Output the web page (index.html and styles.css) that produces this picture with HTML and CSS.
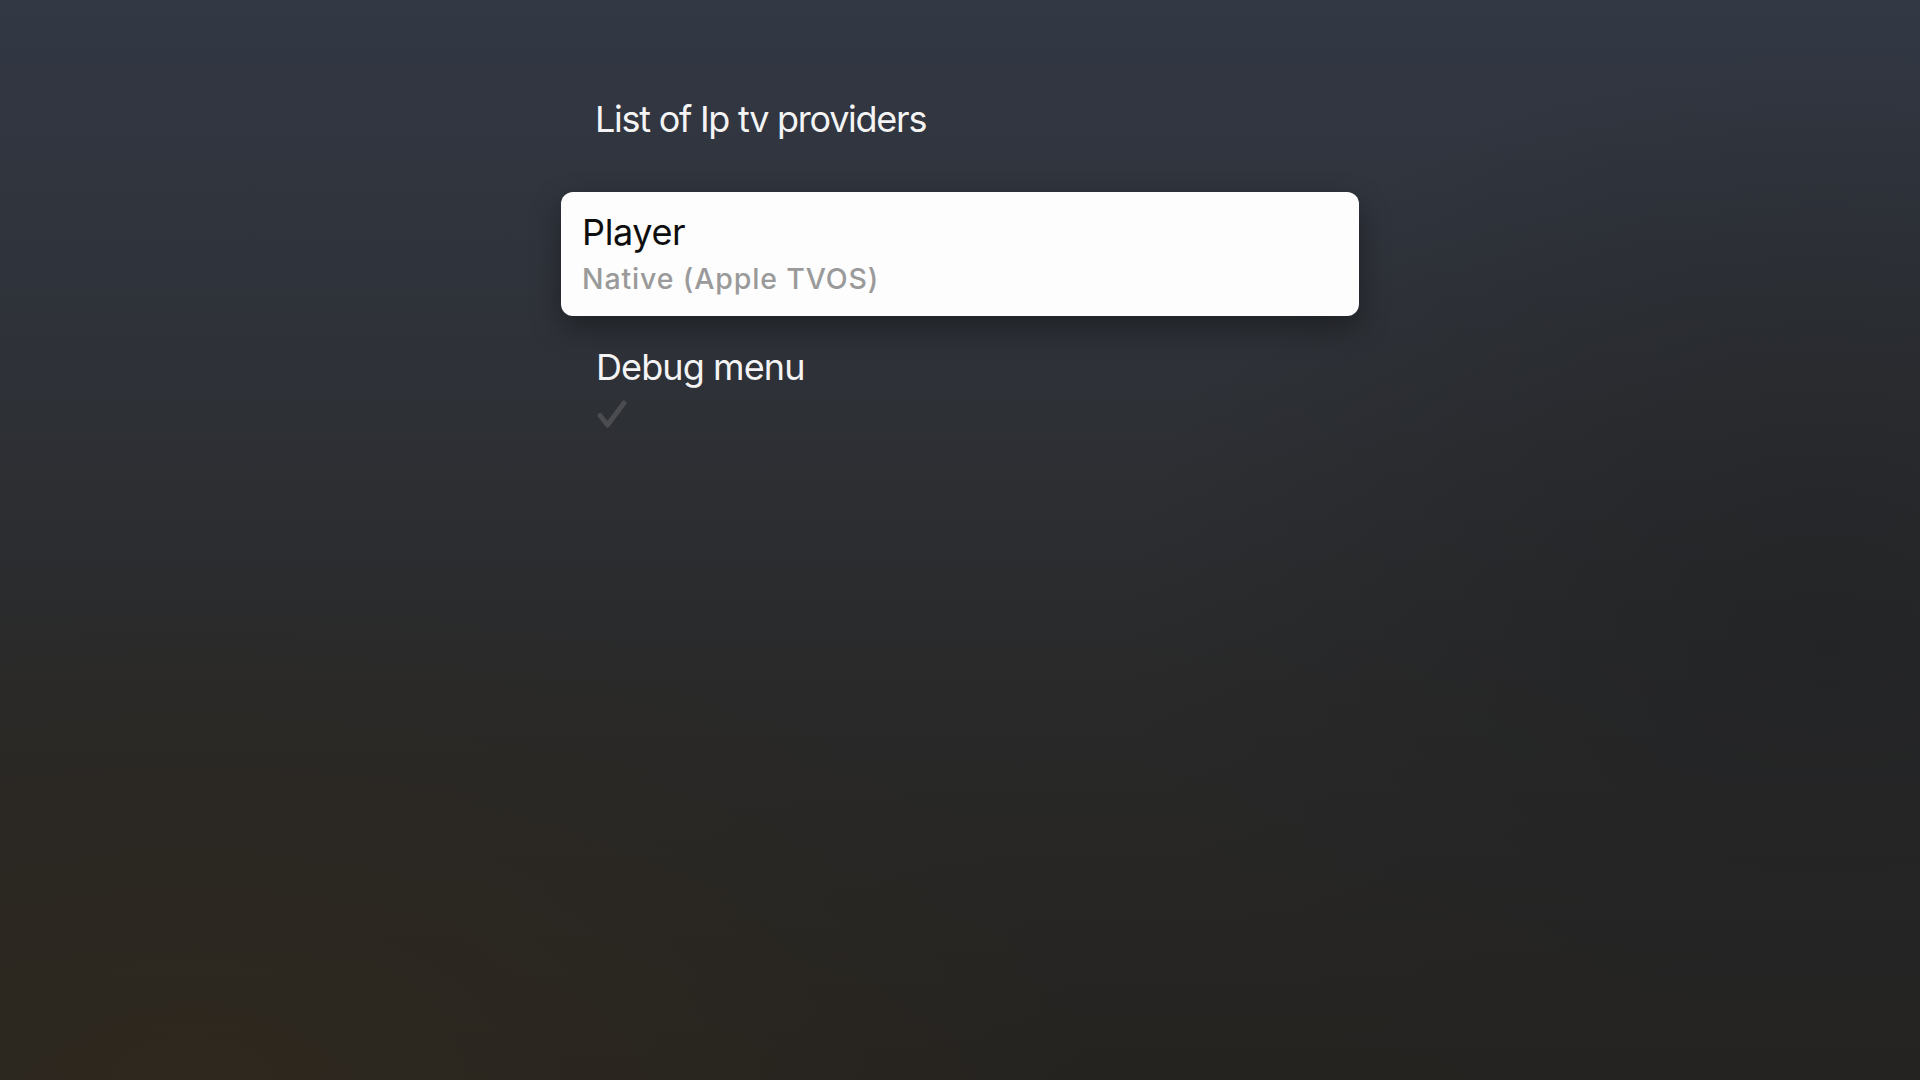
FILE: index.html
```html
<!DOCTYPE html>
<html lang="en">
<head>
<meta charset="utf-8">
<title>Settings</title>
<link rel="stylesheet" href="styles.css">
</head>
<body>
<main class="screen">
  <div class="column">
    <h1 class="title">List of Ip tv providers</h1>
    <div class="card focused">
      <div class="card-title">Player</div>
      <div class="card-value">Native (Apple TVOS)</div>
    </div>
    <div class="item">
      <div class="item-title">Debug menu</div>
      <svg class="check" width="30" height="28" viewBox="0 0 30 28" aria-hidden="true">
        <path d="M3 15.5 L10.5 25 L27 3" fill="none" stroke="#4b4c4f" stroke-width="5" stroke-linecap="round" stroke-linejoin="round"/>
      </svg>
    </div>
  </div>
</main>
</body>
</html>
```
FILE: styles.css
```css
html, body {
  margin: 0;
  padding: 0;
  width: 1920px;
  height: 1080px;
  overflow: hidden;
}
body {
  font-family: Inter, "Open Sans", "Liberation Sans", sans-serif;
  background:
    radial-gradient(ellipse 900px 500px at 10% 100%, rgba(48, 41, 30, 0.85), rgba(48, 41, 30, 0) 100%),
    radial-gradient(ellipse 700px 600px at 95% 60%, rgba(34, 35, 37, 0.8), rgba(34, 35, 37, 0) 100%),
    linear-gradient(180deg, #323844 0%, #2e3137 35%, #292929 65%, #252320 100%);
}
.screen {
  width: 1920px;
  height: 1080px;
}
.column {
  width: 798px;
  margin: 0 auto;
  padding-top: 97px;
  display: flex;
  flex-direction: column;
}
.title {
  margin: 0;
  padding-left: 34px;
  font-size: 36px;
  line-height: 44px;
  font-weight: 400;
  letter-spacing: -0.035em;
  color: #f4f4f5;
}
.card {
  margin-top: 51px;
  height: 124px;
  box-sizing: border-box;
  padding: 18px 21px 0;
  background: #fdfdfd;
  border-radius: 12px;
  box-shadow: 0 12px 30px rgba(0, 0, 0, 0.35);
  display: flex;
  flex-direction: column;
  gap: 8px;
}
.card-title {
  font-size: 36px;
  line-height: 44px;
  letter-spacing: -0.01em;
  color: #0e0e0e;
}
.card-value {
  font-size: 28.5px;
  line-height: 34px;
  font-weight: 500;
  letter-spacing: 0.03em;
  color: #9a9a9a;
}
.item {
  margin-top: 29px;
  padding-left: 35px;
  display: flex;
  flex-direction: column;
  align-items: flex-start;
}
.item-title {
  font-size: 36px;
  line-height: 44px;
  letter-spacing: -0.025em;
  color: #f4f4f5;
}
.check {
  margin-top: 11px;
  margin-left: 1px;
  display: block;
}
```
